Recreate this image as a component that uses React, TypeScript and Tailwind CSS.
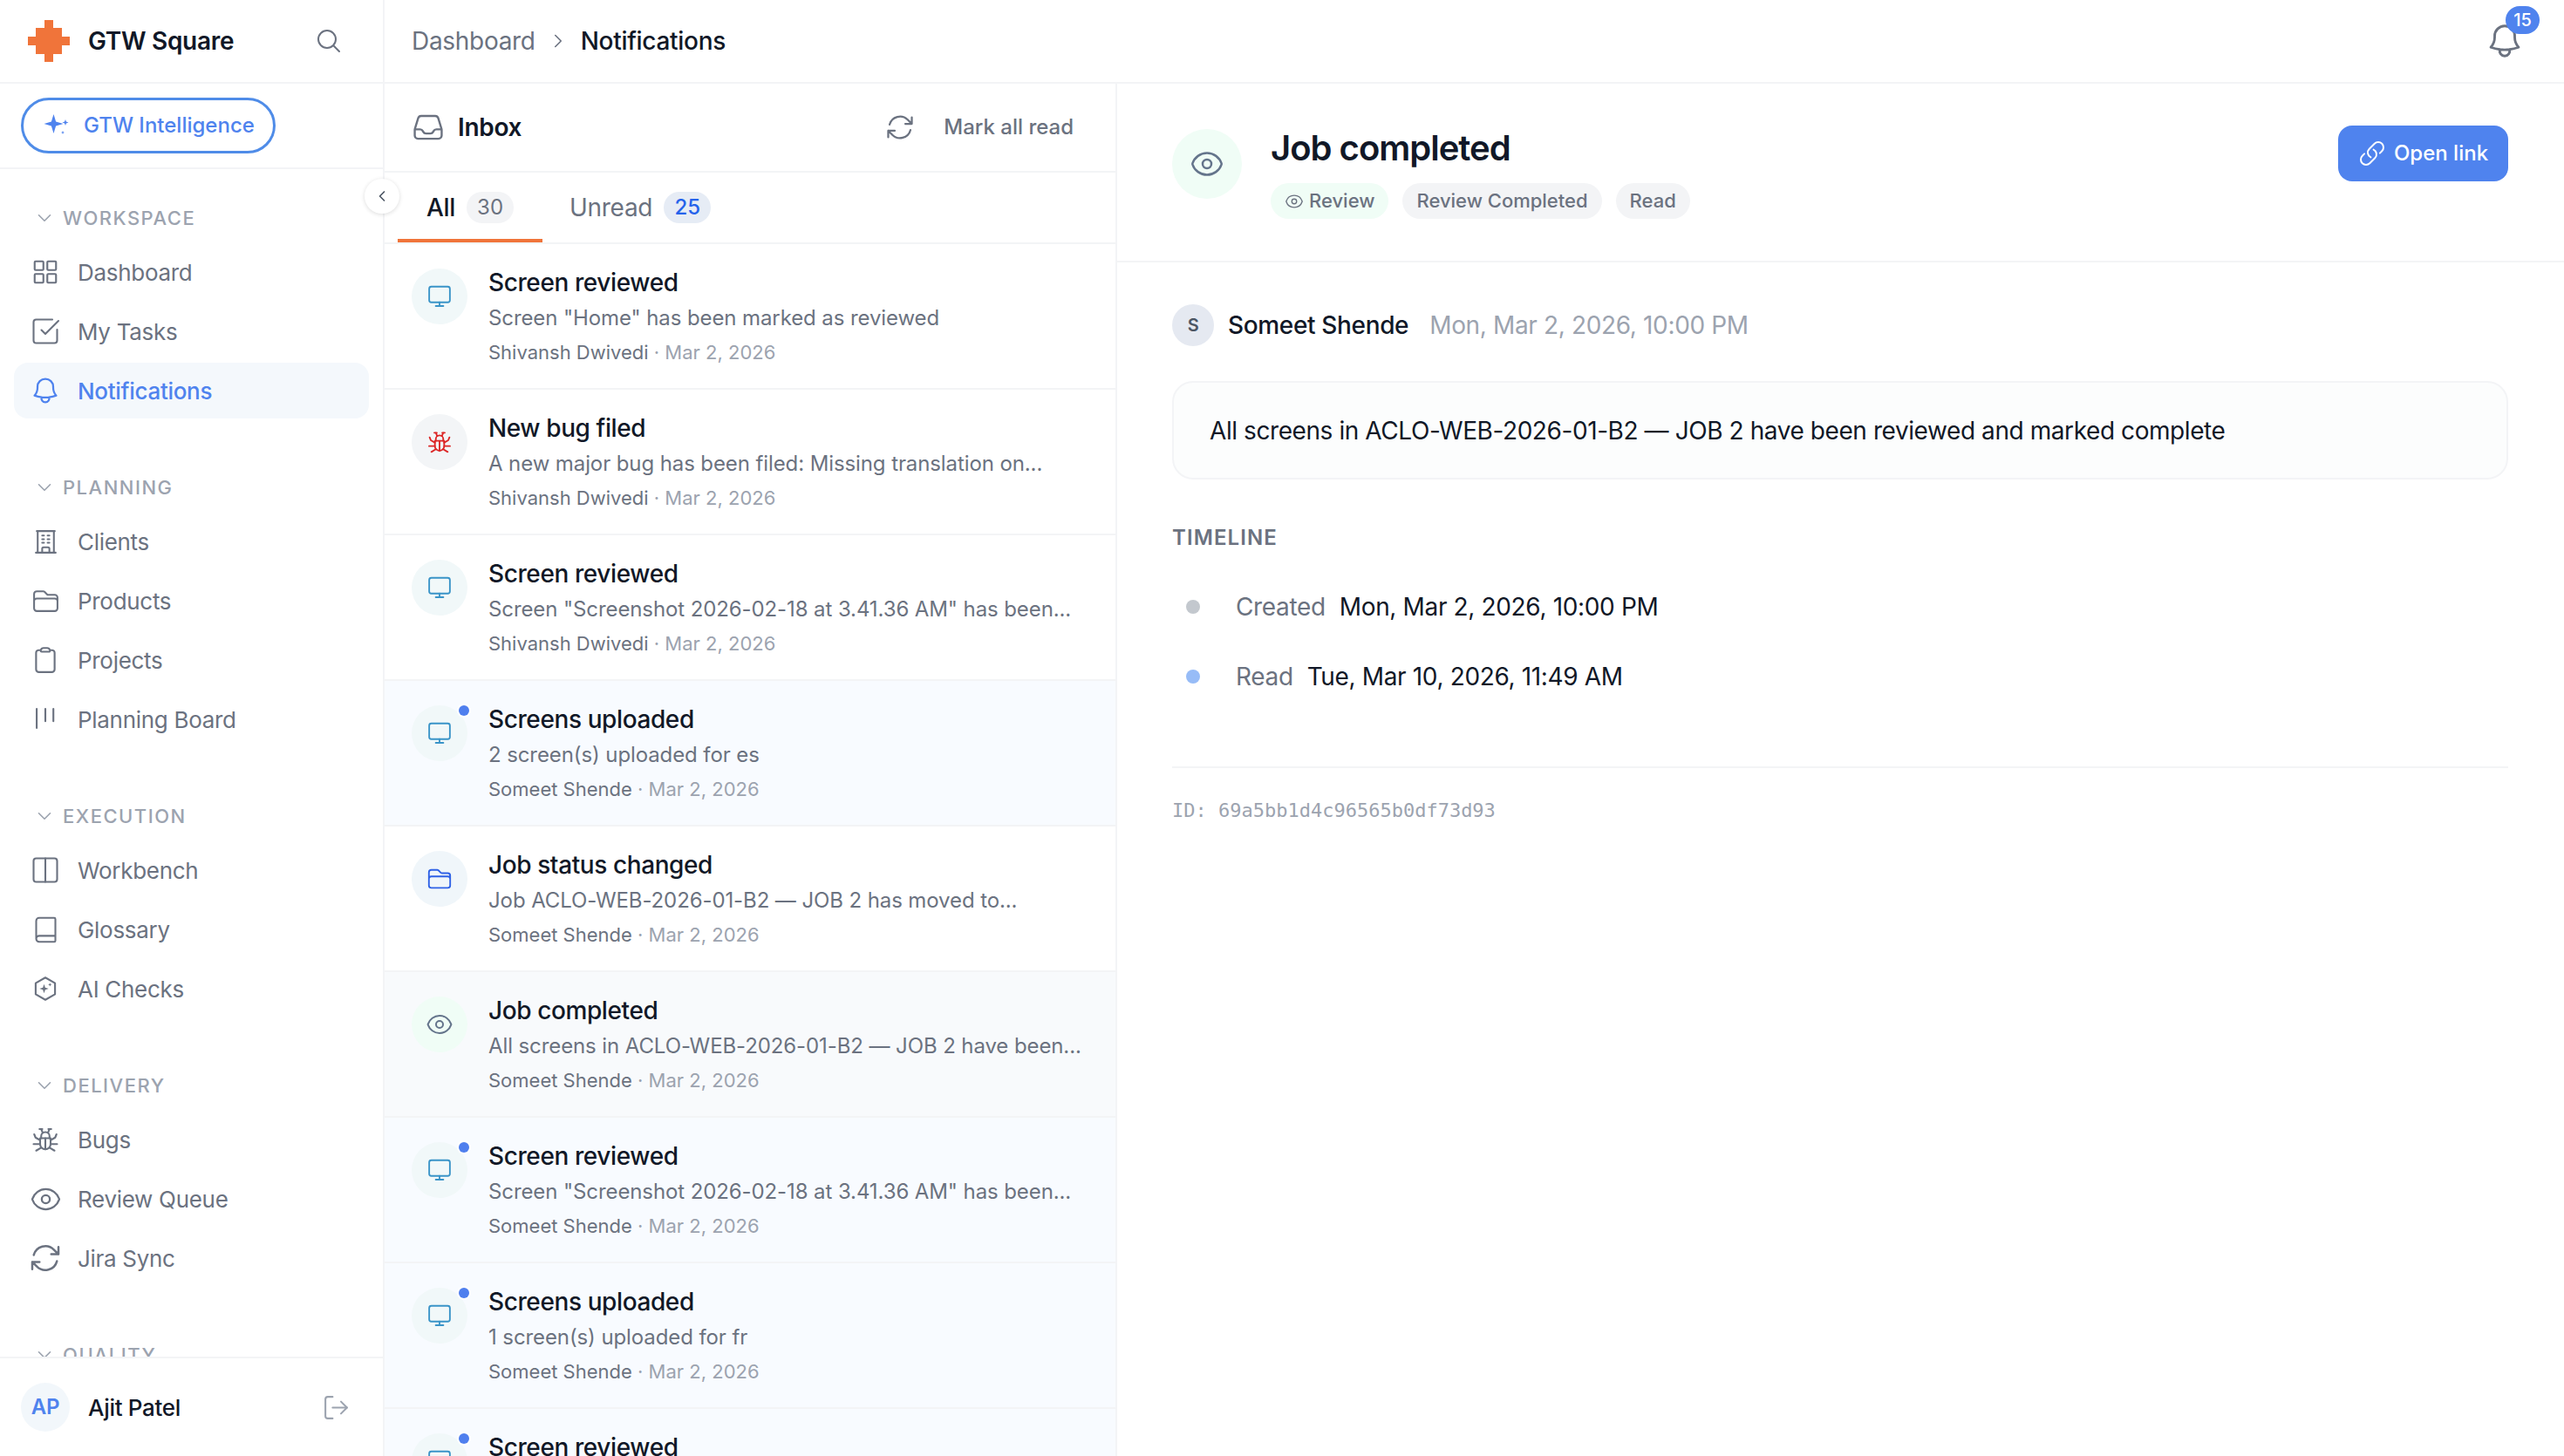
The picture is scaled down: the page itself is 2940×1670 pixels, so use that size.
import type { ReactNode } from "react";
import {
  HiOutlineArrowPath,
  HiOutlineBell,
  HiOutlineBuildingOffice,
  HiOutlineClipboard,
  HiOutlineEye,
  HiOutlineFolder,
  HiOutlineInbox,
  HiOutlineLink,
  HiOutlineMagnifyingGlass,
} from "react-icons/hi2";
import { Book, ChevronDown, ChevronLeft, ChevronRight, Columns2, LogOut, SquareCheckBig } from "lucide-react";

type NavItem = { label: string; icon: ReactNode; active?: boolean };

function PlanningIcon() {
  return (
    <svg viewBox="0 0 24 24" className="h-[34px] w-[34px] shrink-0" fill="none" stroke="currentColor" strokeWidth="1.5" strokeLinecap="round">
      <path d="M5 3.500v15.500M12 3.500v10M18.500 3.500v10" />
    </svg>
  );
}

function AiCheckIcon() {
  return (
    <svg viewBox="0 0 24 24" className="h-[36px] w-[36px] shrink-0" fill="none" stroke="currentColor" strokeWidth="1.4" strokeLinejoin="round">
      <path d="M12 3.500l7.400 4.200v8.600L12 20.500l-7.400-4.200V7.700z" />
      <path d="M11 8.500l.9 2.600 2.600.9-2.600.9-.9 2.600-.9-2.600-2.600-.9 2.600-.9z" fill="currentColor" stroke="none" />
      <path d="M15.500 7.500l.4 1 1 .4-1 .4-.4 1-.4-1-1-.4 1-.4z" fill="currentColor" stroke="none" />
    </svg>
  );
}

function GridIcon() {
  return (
    <svg viewBox="0 0 24 24" className="h-[30px] w-[30px] shrink-0" fill="none" stroke="currentColor" strokeWidth="1.7">
      <rect x="2.200" y="2.200" width="8" height="8" rx="0.8" />
      <rect x="13.800" y="2.200" width="8" height="8" rx="0.8" />
      <rect x="2.200" y="13.800" width="8" height="8" rx="0.8" />
      <rect x="13.800" y="13.800" width="8" height="8" rx="0.8" />
    </svg>
  );
}

function BugIcon({ className }: { className: string }) {
  return (
    <svg viewBox="0 0 24 24" className={className} fill="none" stroke="currentColor" strokeWidth="1.4" strokeLinecap="round" strokeLinejoin="round">
      <path d="M8 11h8v4.500a4 4 0 0 1-8 0z" />
      <path d="M8.800 11V9.500a3.200 3.200 0 0 1 6.400 0V11" />
      <path d="M12 11v8.500" />
      <path d="M10 6.800L8.800 4M14 6.800L15.200 4M7.500 4h2.200M14.300 4h2.200" />
      <path d="M8 12.500L4.500 10.500 3.500 8M16 12.500l3.500-2 1-2.500" />
      <path d="M8 15.500H3M16 15.500h5" />
      <path d="M8.800 18.200L5 20.500M15.200 18.200L19 20.500" />
    </svg>
  );
}

function MonitorIcon() {
  return (
    <svg viewBox="0 0 24 24" className="h-[30px] w-[30px] text-[#3a94c8]" fill="none" stroke="currentColor" strokeWidth="1.5" strokeLinecap="round" strokeLinejoin="round">
      <rect x="2.500" y="3" width="19" height="14.400" rx="2" />
      <path d="M12 17.400v3.200M8.500 20.800h7" />
    </svg>
  );
}

const SECTIONS: { title: string; items: NavItem[] }[] = [
  {
    title: "WORKSPACE",
    items: [
      { label: "Dashboard", icon: <GridIcon /> },
      { label: "My Tasks", icon: <SquareCheckBig className="h-[36px] w-[36px] shrink-0" strokeWidth={1.4} /> },
      { label: "Notifications", icon: <HiOutlineBell className="h-[36px] w-[36px] shrink-0" />, active: true },
    ],
  },
  {
    title: "PLANNING",
    items: [
      { label: "Clients", icon: <HiOutlineBuildingOffice className="h-[33px] w-[33px] shrink-0" /> },
      { label: "Products", icon: <HiOutlineFolder className="h-[33px] w-[33px] shrink-0" /> },
      { label: "Projects", icon: <HiOutlineClipboard className="h-[34px] w-[34px] shrink-0" /> },
      { label: "Planning Board", icon: <PlanningIcon /> },
    ],
  },
  {
    title: "EXECUTION",
    items: [
      { label: "Workbench", icon: <Columns2 className="h-[36px] w-[36px] shrink-0" strokeWidth={1.4} /> },
      { label: "Glossary", icon: <Book className="h-[33px] w-[33px] shrink-0" strokeWidth={1.5} /> },
      { label: "AI Checks", icon: <AiCheckIcon /> },
    ],
  },
  {
    title: "DELIVERY",
    items: [
      { label: "Bugs", icon: <BugIcon className="h-[36px] w-[36px] shrink-0" /> },
      { label: "Review Queue", icon: <HiOutlineEye className="h-[37px] w-[37px] shrink-0" /> },
      { label: "Jira Sync", icon: <HiOutlineArrowPath className="h-[40px] w-[40px] shrink-0" /> },
    ],
  },
  { title: "QUALITY", items: [] },
];

type Kind = "screen" | "bug" | "folder" | "eye";

const ROWS: { title: string; desc: string; who: string; kind: Kind; unread?: boolean; selected?: boolean }[] = [
  { title: "Screen reviewed", desc: 'Screen "Home" has been marked as reviewed', who: "Shivansh Dwivedi", kind: "screen" },
  { title: "New bug filed", desc: "A new major bug has been filed: Missing translation on...", who: "Shivansh Dwivedi", kind: "bug" },
  { title: "Screen reviewed", desc: 'Screen "Screenshot 2026-02-18 at 3.41.36 AM" has been...', who: "Shivansh Dwivedi", kind: "screen" },
  { title: "Screens uploaded", desc: "2 screen(s) uploaded for es", who: "Someet Shende", kind: "screen", unread: true },
  { title: "Job status changed", desc: "Job ACLO-WEB-2026-01-B2 — JOB 2 has moved to...", who: "Someet Shende", kind: "folder" },
  { title: "Job completed", desc: "All screens in ACLO-WEB-2026-01-B2 — JOB 2 have been...", who: "Someet Shende", kind: "eye", selected: true },
  { title: "Screen reviewed", desc: 'Screen "Screenshot 2026-02-18 at 3.41.36 AM" has been...', who: "Someet Shende", kind: "screen", unread: true },
  { title: "Screens uploaded", desc: "1 screen(s) uploaded for fr", who: "Someet Shende", kind: "screen", unread: true },
  { title: "Screen reviewed", desc: 'Screen "Screenshot 2026-02-18 at 3.41.36 AM" has been...', who: "Someet Shende", kind: "screen", unread: true },
];

function KindIcon({ kind }: { kind: Kind }) {
  if (kind === "bug") return <BugIcon className="h-[32px] w-[32px] text-[#dc2626]" />;
  if (kind === "folder") return <HiOutlineFolder className="h-[30px] w-[30px] text-[#2f62e6]" />;
  if (kind === "eye") return <HiOutlineEye className="h-[32px] w-[32px] text-[#64748b]" />;
  return <MonitorIcon />;
}

const KIND_BG: Record<Kind, string> = {
  screen: "bg-[#f1f8f9]",
  bug: "bg-[#f3f5f7]",
  folder: "bg-[#f0f6fa]",
  eye: "bg-[#f0fdf6]",
};

function Logo() {
  return (
    <svg viewBox="0 0 48 48" className="h-[48px] w-[48px]" fill="#f0743a">
      <path d="M19 0h10v9h10v10h9v10h-9v10H29v9H19v-9H9V29H0V19h9V9h10z" />
    </svg>
  );
}

function Sparkles() {
  return (
    <svg viewBox="0 0 30 28" className="h-[28px] w-[30px]" fill="#4f83ee">
      <path d="M11.500 1l2.600 8.400L22.500 12l-8.400 2.600L11.500 23l-2.600-8.400L.5 12l8.400-2.600z" />
      <path d="M25 7l.9 2.600L28.500 10.500l-2.600.9L25 14l-.9-2.600-2.600-.9 2.600-.9z" />
      <path d="M22 20l.6 1.400 1.400.6-1.400.6L22 24l-.6-1.400-1.400-.6 1.400-.6z" />
    </svg>
  );
}

function Sidebar() {
  return (
    <aside className="relative flex h-full w-[441px] shrink-0 flex-col border-r-2 border-[#f3f4f6] bg-white">
      <div className="flex h-[96px] shrink-0 items-center border-b-2 border-[#f3f4f6] pl-[32px] pr-[46px]">
        <Logo />
        <span className="ml-[21px] text-[28px] font-semibold text-[#111827]">GTW Square</span>
        <HiOutlineMagnifyingGlass className="ml-auto h-[32px] w-[32px] text-[#6b7280]" />
      </div>
      <div className="flex h-[98px] shrink-0 items-center border-b-2 border-[#f3f4f6] pl-[24px]">
        <button className="flex h-[64px] w-[292px] items-center gap-[16px] rounded-full border-[3px] border-[#4f8ce8] pl-[23px] text-[24px] font-medium tracking-normal text-[#4f83ee]">
          <Sparkles />
          GTW Intelligence
        </button>
      </div>
      <nav className="flex-1 overflow-hidden pt-[34px]">
        {SECTIONS.map((s) => (
          <div key={s.title} className="mb-[57px]">
            <div className="flex h-[44px] items-center pl-[38px] text-[22px] font-medium tracking-[1.5px] text-[#9ca3af]">
              <ChevronDown className="mr-[8px] h-[26px] w-[26px]" strokeWidth={1.5} />
              {s.title}
            </div>
            <div className="mt-[8px] flex flex-col gap-[4px]">
              {s.items.map((it) => (
                <div
                  key={it.label}
                  className={
                    it.active
                      ? "mx-[16px] flex h-[64px] items-center rounded-[16px] bg-[#f4f8fc] pl-[21px] text-[26px] font-medium text-[#4f83ee]"
                      : "mx-[16px] flex h-[64px] items-center rounded-[16px] pl-[21px] text-[26px] text-[#6b7280]"
                  }
                >
                  <span className="flex w-[30px] items-center justify-center">{it.icon}</span>
                  <span className="ml-[22px]">{it.label}</span>
                </div>
              ))}
            </div>
          </div>
        ))}
      </nav>
      <div className="flex h-[114px] shrink-0 items-center border-t-2 border-[#f3f4f6] bg-white pl-[24px] pr-[37px]">
        <div className="flex h-[56px] w-[56px] items-center justify-center rounded-full bg-[#f2f7fb] text-[24px] font-semibold text-[#4f83ee]">
          AP
        </div>
        <span className="ml-[21px] text-[26px] font-medium text-[#111827]">Ajit Patel</span>
        <LogOut className="ml-auto h-[33px] w-[33px] text-[#9ca3af]" strokeWidth={1.5} />
      </div>
      <button className="absolute right-[-19px] top-[205px] z-10 flex h-[40px] w-[40px] items-center justify-center rounded-full bg-white text-[#4b5563] shadow-[0_1px_5px_rgba(0,0,0,0.14)]">
        <ChevronLeft className="h-[20px] w-[20px]" strokeWidth={2} />
      </button>
    </aside>
  );
}

function Row({ row }: { row: (typeof ROWS)[number] }) {
  const bg = row.selected ? "bg-[#f8fafc]" : row.unread ? "bg-[#f8fbff]" : "bg-white";
  return (
    <div className={`flex h-[167px] shrink-0 border-b-2 border-[#f3f4f6] pl-[31px] pt-[28px] ${bg}`}>
      <div className={`relative flex h-[64px] w-[64px] shrink-0 items-center justify-center rounded-full ${KIND_BG[row.kind]}`}>
        <KindIcon kind={row.kind} />
        {row.unread && (
          <span className="absolute right-[-2px] top-0 h-[12px] w-[12px] rounded-full bg-[#4f7fee] ring-2 ring-white" />
        )}
      </div>
      <div className="ml-[24px] -mt-[2px] min-w-0">
        <p className="text-[28px] leading-[36px] font-medium tracking-[-0.4px] text-[#111827]">{row.title}</p>
        <p className="mt-[5px] whitespace-nowrap text-[24px] leading-[36px] tracking-[-0.1px] text-[#6b7280]">{row.desc}</p>
        <p className="mt-[5px] text-[22px] leading-[32px] tracking-normal text-[#9ca3af]">
          <span className="text-[#6b7280]">{row.who}</span> · Mar 2, 2026
        </p>
      </div>
    </div>
  );
}

function InboxList() {
  return (
    <section className="flex h-full w-[840px] shrink-0 flex-col overflow-hidden border-r-2 border-[#f3f4f6]">
      <div className="flex h-[102px] shrink-0 items-center border-b-2 border-[#f3f4f6] pl-[31px] pr-[48px]">
        <HiOutlineInbox className="h-[38px] w-[38px] text-[#6b7280]" />
        <span className="ml-[15px] text-[28px] font-semibold text-[#111827]">Inbox</span>
        <HiOutlineArrowPath className="ml-auto h-[36px] w-[36px] text-[#6b7280]" />
        <span className="ml-[32px] text-[24px] font-medium tracking-normal text-[#6b7280]">Mark all read</span>
      </div>
      <div className="flex h-[82px] shrink-0 border-b-2 border-[#f3f4f6] pl-[15px]">
        <div className="flex h-[80px] items-center gap-[13px] border-b-4 border-[#f0743a] px-[33px] pt-[4px] text-[28px] font-medium text-[#111827]">
          All
          <span className="flex h-[36px] w-[54px] items-center justify-center rounded-full bg-[#f3f4f6] text-[24px] font-normal tracking-normal text-[#6b7280]">
            30
          </span>
        </div>
        <div className="flex h-[80px] items-center gap-[13px] pl-[31px] pr-[32px] text-[28px] text-[#6b7280]">
          Unread
          <span className="flex h-[36px] w-[54px] items-center justify-center rounded-full bg-[#e6ecf5] text-[24px] font-medium tracking-normal text-[#2563eb]">
            25
          </span>
        </div>
      </div>
      {ROWS.map((r, i) => (
        <Row key={i} row={r} />
      ))}
    </section>
  );
}

function Detail() {
  return (
    <main className="flex h-full flex-1 flex-col">
      <div className="flex h-[205px] shrink-0 border-b-2 border-[#f3f4f6] pl-[63px] pr-[64px] pt-[52px]">
        <div className="flex h-[80px] w-[80px] shrink-0 items-center justify-center rounded-full bg-[#f0fdf6]">
          <HiOutlineEye className="h-[40px] w-[40px] text-[#64748b]" />
        </div>
        <div className="ml-[33px] -mt-[2px]">
          <h1 className="text-[40px] leading-[48px] font-semibold tracking-tight text-[#111827]">Job completed</h1>
          <div className="mt-[16px] flex gap-[16px] tracking-normal">
            <span className="flex h-[41px] items-center gap-[6px] rounded-full bg-[#f0fdf6] px-[16px] text-[22px] font-medium text-[#6b7280]">
              <HiOutlineEye className="h-[22px] w-[22px]" />
              Review
            </span>
            <span className="flex h-[41px] items-center rounded-full bg-[#f3f4f6] px-[16px] text-[22px] font-medium text-[#6b7280]">
              Review Completed
            </span>
            <span className="flex h-[41px] items-center rounded-full bg-[#f3f4f6] px-[16px] text-[22px] font-medium text-[#6b7280]">
              Read
            </span>
          </div>
        </div>
        <button className="ml-auto mt-[-4px] flex h-[64px] w-[195px] items-center justify-center gap-[9px] rounded-[16px] bg-[#4f83ee] text-[24px] font-medium tracking-normal text-white">
          <HiOutlineLink className="h-[32px] w-[32px]" />
          Open link
        </button>
      </div>

      <div className="pl-[63px] pr-[64px] pt-[48px]">
        <div className="flex items-center tracking-[-0.35px]">
          <div className="flex h-[48px] w-[48px] items-center justify-center rounded-full bg-[#e5e9f1] text-[20px] font-semibold text-[#4b5563]">
            S
          </div>
          <span className="ml-[16px] text-[28px] font-medium text-[#111827]">Someet Shende</span>
          <span className="ml-[24px] text-[28px] text-[#9ca3af]">Mon, Mar 2, 2026, 10:00 PM</span>
        </div>

        <div className="mt-[40px] flex h-[113px] items-center rounded-[24px] border-2 border-[#f3f4f6] bg-[#fcfdfd] px-[41px] text-[28px] tracking-[-0.42px] text-[#111827]">
          All screens in ACLO-WEB-2026-01-B2 — JOB 2 have been reviewed and marked complete
        </div>

        <h2 className="mt-[50px] text-[24px] leading-[34px] font-semibold tracking-[1.1px] text-[#6b7280]">TIMELINE</h2>

        <div className="mt-[42px] flex h-[40px] items-center tracking-[-0.35px]">
          <span className="ml-[16px] h-[16px] w-[16px] rounded-full bg-[#c3c8ce]" />
          <span className="ml-[41px] text-[28px] text-[#6b7280]">Created</span>
          <span className="ml-[16px] text-[28px] text-[#111827]">Mon, Mar 2, 2026, 10:00 PM</span>
        </div>
        <div className="mt-[40px] flex h-[40px] items-center tracking-[-0.35px]">
          <span className="ml-[16px] h-[16px] w-[16px] rounded-full bg-[#97bcf7]" />
          <span className="ml-[41px] text-[28px] text-[#6b7280]">Read</span>
          <span className="ml-[16px] text-[28px] text-[#111827]">Tue, Mar 10, 2026, 11:49 AM</span>
        </div>

        <div className="mt-[83px] border-t-2 border-[#f3f4f6] pt-[36px] font-['DejaVu_Sans_Mono',monospace] text-[22px] leading-[26px] tracking-normal text-[#9ca3af]">
          ID: 69a5bb1d4c96565b0df73d93
        </div>
      </div>
    </main>
  );
}

export default function App() {
  return (
    <div className="flex h-screen w-screen overflow-hidden bg-white font-[Inter,sans-serif] tracking-[-0.3px]">
      <Sidebar />
      <div className="flex h-full min-w-0 flex-1 flex-col">
        <header className="flex h-[96px] shrink-0 items-center border-b-2 border-[#f3f4f6] pl-[31px] pr-[45px]">
          <span className="text-[28px] text-[#6b7280]">Dashboard</span>
          <ChevronRight className="mx-[13px] h-[26px] w-[26px] text-[#6b7280]" strokeWidth={1.5} />
          <span className="text-[28px] font-medium text-[#111827]">Notifications</span>
          <div className="relative ml-auto h-[46px] w-[46px] self-center">
            <HiOutlineBell className="h-[46px] w-[46px] text-[#6b7280]" />
            <span className="absolute right-[-17px] top-[-17px] flex h-[32px] w-[39px] items-center justify-center rounded-full bg-[#4f83ee] text-[20px] font-medium tracking-normal text-white">
              15
            </span>
          </div>
        </header>
        <div className="flex min-h-0 flex-1">
          <InboxList />
          <Detail />
        </div>
      </div>
    </div>
  );
}
